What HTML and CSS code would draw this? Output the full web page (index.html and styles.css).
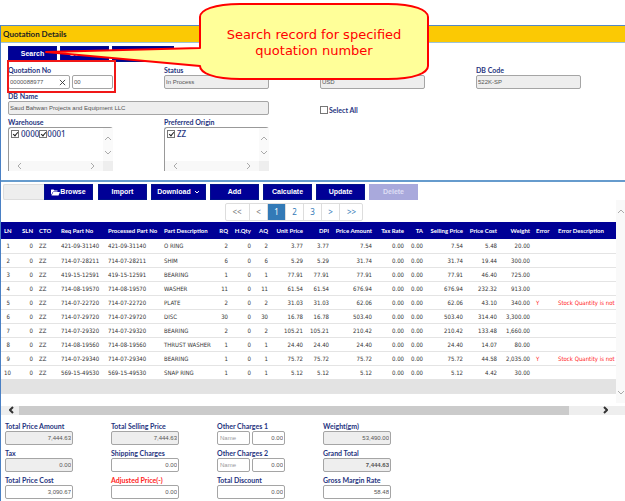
FILE: index.html
```html
<!DOCTYPE html>
<html lang="en">
<head>
<meta charset="utf-8">
<title>Quotation Details</title>
<link rel="stylesheet" href="styles.css">
</head>
<body>
<main class="page">
  <h1 class="title">Quotation Details</h1>
  <section class="details">
    <div class="actions">
      <button class="btn w-s">Search</button>
      <button class="btn w-s">Generate</button>
      <button class="btn w-l" aria-label="Reset"></button>
    </div>
    <div class="fields">
      <div class="field">
        <label for="qno">Quotation No</label>
        <div class="pair">
          <div class="clearable"><input id="qno" value="0000088977"><button class="clear" aria-label="Clear"><svg viewBox="0 0 8 8"><path d="M1 1L7 7M7 1L1 7"/></svg></button></div>
          <input class="rev" aria-label="Revision" value="00">
        </div>
      </div>
      <div class="field"><label for="status">Status</label><input id="status" readonly value="In Process"></div>
      <div class="field"><label for="cur">Currency</label><input id="cur" readonly value="USD"></div>
      <div class="field"><label for="code">DB Code</label><input id="code" readonly value="522K-SP"></div>
      <div class="field wide"><label for="dbname">DB Name</label><input id="dbname" readonly value="Saud Bahwan Projects and Equipment LLC"></div>
      <div class="field select-all"><label><input type="checkbox">Select All</label></div>
      <div class="field start">
        <span class="caption">Warehouse</span>
        <div class="list">
          <div class="options"><label><input type="checkbox" checked><span>0000</span></label><label class="next"><input type="checkbox" checked>0001</label></div>
          <div class="vbar"><svg viewBox="0 0 8 5"><path d="M1 4L4 1L7 4"/></svg><svg viewBox="0 0 8 5"><path d="M1 1L4 4L7 1"/></svg></div>
          <div class="hbar"><svg viewBox="0 0 5 8"><path d="M4 1L1 4L4 7"/></svg><svg viewBox="0 0 5 8"><path d="M1 1L4 4L1 7"/></svg></div>
          <div class="corner"></div>
        </div>
      </div>
      <div class="field">
        <span class="caption">Preferred Origin</span>
        <div class="list">
          <div class="options"><label><input type="checkbox" checked><span>ZZ</span></label></div>
          <div class="vbar"><svg viewBox="0 0 8 5"><path d="M1 4L4 1L7 4"/></svg><svg viewBox="0 0 8 5"><path d="M1 1L4 4L7 1"/></svg></div>
          <div class="hbar"><svg viewBox="0 0 5 8"><path d="M4 1L1 4L4 7"/></svg><svg viewBox="0 0 5 8"><path d="M1 1L4 4L1 7"/></svg></div>
          <div class="corner"></div>
        </div>
      </div>
    </div>
  </section>

  <section class="items">
    <div class="toolbar">
      <div class="upload"><input readonly aria-label="File"><button class="btn w-s"><svg class="folder" viewBox="0 0 18 14"><path d="M0 12V2Q0 1 1 1H5L7 3H13V5H5Q4 5 3.500 6Z"/><path d="M4.500 6H18L15 13H1Z"/></svg>Browse</button></div>
      <button class="btn w-s">Import</button>
      <button class="btn w-m">Download <svg class="caret" viewBox="0 0 6 4"><path d="M1 1L3 3L5 1"/></svg></button>
      <button class="btn w-s">Add</button>
      <button class="btn w-s">Calculate</button>
      <button class="btn w-s">Update</button>
      <button class="btn w-s" disabled>Delete</button>
    </div>
    <div class="viewport">
      <div class="content">
        <nav class="pager" aria-label="Pages">
          <a class="off wide-page" href="#">&lt;&lt;</a><a class="off" href="#">&lt;</a><a class="current" href="#">1</a><a href="#">2</a><a href="#">3</a><a href="#">&gt;</a><a class="wide-page" href="#">&gt;&gt;</a>
        </nav>
        <table>
          <colgroup><col class="c12"><col class="c23"><col class="c22"><col class="c47"><col class="c56"><col class="c54"><col class="c16"><col class="c23"><col class="c17"><col class="c35"><col class="c26"><col class="c43"><col class="c32"><col class="c19"><col class="c40"><col class="c34"><col class="c33"><col class="c22"><col></colgroup>
          <thead><tr><th class="n">LN</th><th class="n">SLN</th><th>CTO</th><th>Req Part No</th><th>Processed Part No</th><th>Part Description</th><th class="n">RQ</th><th class="n">H.Qty</th><th class="n">AQ</th><th class="n">Unit Price</th><th class="n">DPI</th><th class="n">Price Amount</th><th class="n">Tax Rate</th><th class="n">TA</th><th class="n">Selling Price</th><th class="n">Price Cost</th><th class="n">Weight</th><th>Error</th><th>Error Description</th></tr></thead>
          <tbody>
            <tr><td class="n">1</td><td class="n">0</td><td>ZZ</td><td>421-09-31140</td><td>421-09-31140</td><td>O RING</td><td class="n">2</td><td class="n">0</td><td class="n">2</td><td class="n">3.77</td><td class="n">3.77</td><td class="n">7.54</td><td class="n">0.00</td><td class="n">0.00</td><td class="n">7.54</td><td class="n">5.48</td><td class="n">20.00</td><td></td><td></td></tr>
            <tr><td class="n">2</td><td class="n">0</td><td>ZZ</td><td>714-07-28211</td><td>714-07-28211</td><td>SHIM</td><td class="n">6</td><td class="n">0</td><td class="n">6</td><td class="n">5.29</td><td class="n">5.29</td><td class="n">31.74</td><td class="n">0.00</td><td class="n">0.00</td><td class="n">31.74</td><td class="n">19.44</td><td class="n">300.00</td><td></td><td></td></tr>
            <tr><td class="n">3</td><td class="n">0</td><td>ZZ</td><td>419-15-12591</td><td>419-15-12591</td><td>BEARING</td><td class="n">1</td><td class="n">0</td><td class="n">1</td><td class="n">77.91</td><td class="n">77.91</td><td class="n">77.91</td><td class="n">0.00</td><td class="n">0.00</td><td class="n">77.91</td><td class="n">46.40</td><td class="n">725.00</td><td></td><td></td></tr>
            <tr><td class="n">4</td><td class="n">0</td><td>ZZ</td><td>714-08-19570</td><td>714-08-19570</td><td>WASHER</td><td class="n">11</td><td class="n">0</td><td class="n">11</td><td class="n">61.54</td><td class="n">61.54</td><td class="n">676.94</td><td class="n">0.00</td><td class="n">0.00</td><td class="n">676.94</td><td class="n">232.32</td><td class="n">913.00</td><td></td><td></td></tr>
            <tr><td class="n">5</td><td class="n">0</td><td>ZZ</td><td>714-07-22720</td><td>714-07-22720</td><td>PLATE</td><td class="n">2</td><td class="n">0</td><td class="n">2</td><td class="n">31.03</td><td class="n">31.03</td><td class="n">62.06</td><td class="n">0.00</td><td class="n">0.00</td><td class="n">62.06</td><td class="n">43.10</td><td class="n">340.00</td><td class="err">Y</td><td class="err">Stock Quantity is not</td></tr>
            <tr><td class="n">6</td><td class="n">0</td><td>ZZ</td><td>714-07-29720</td><td>714-07-29720</td><td>DISC</td><td class="n">30</td><td class="n">0</td><td class="n">30</td><td class="n">16.78</td><td class="n">16.78</td><td class="n">503.40</td><td class="n">0.00</td><td class="n">0.00</td><td class="n">503.40</td><td class="n">314.40</td><td class="n">3,300.00</td><td></td><td></td></tr>
            <tr><td class="n">7</td><td class="n">0</td><td>ZZ</td><td>714-07-29320</td><td>714-07-29320</td><td>BEARING</td><td class="n">2</td><td class="n">0</td><td class="n">2</td><td class="n">105.21</td><td class="n">105.21</td><td class="n">210.42</td><td class="n">0.00</td><td class="n">0.00</td><td class="n">210.42</td><td class="n">133.48</td><td class="n">1,660.00</td><td></td><td></td></tr>
            <tr><td class="n">8</td><td class="n">0</td><td>ZZ</td><td>714-08-19560</td><td>714-08-19560</td><td>THRUST WASHER</td><td class="n">1</td><td class="n">0</td><td class="n">1</td><td class="n">24.40</td><td class="n">24.40</td><td class="n">24.40</td><td class="n">0.00</td><td class="n">0.00</td><td class="n">24.40</td><td class="n">14.07</td><td class="n">80.00</td><td></td><td></td></tr>
            <tr><td class="n">9</td><td class="n">0</td><td>ZZ</td><td>714-07-29340</td><td>714-07-29340</td><td>BEARING</td><td class="n">1</td><td class="n">0</td><td class="n">1</td><td class="n">75.72</td><td class="n">75.72</td><td class="n">75.72</td><td class="n">0.00</td><td class="n">0.00</td><td class="n">75.72</td><td class="n">44.58</td><td class="n">2,035.00</td><td class="err">Y</td><td class="err">Stock Quantity is not</td></tr>
            <tr><td class="n">10</td><td class="n">0</td><td>ZZ</td><td>569-15-49530</td><td>569-15-49530</td><td>SNAP RING</td><td class="n">1</td><td class="n">0</td><td class="n">1</td><td class="n">5.12</td><td class="n">5.12</td><td class="n">5.12</td><td class="n">0.00</td><td class="n">0.00</td><td class="n">5.12</td><td class="n">4.42</td><td class="n">30.00</td><td></td><td></td></tr>
          </tbody>
          <tfoot><tr><td colspan="19"></td></tr></tfoot>
        </table>
      </div>
      <div class="rail"><svg viewBox="0 0 8 5"><path d="M1 4L4 1L7 4"/></svg><svg viewBox="0 0 8 5"><path d="M1 1L4 4L7 1"/></svg></div>
    </div>
    <div class="scroll"><svg viewBox="0 0 5 8"><path d="M4 1L1 4L4 7"/></svg><div class="track"><div class="thumb"></div></div><svg viewBox="0 0 5 8"><path d="M1 1L4 4L1 7"/></svg></div>
  </section>

  <section class="totals">
    <div class="field"><label for="t1">Total Price Amount</label><input id="t1" readonly value="7,444.63"></div>
    <div class="field"><label for="t2">Total Selling Price</label><input id="t2" readonly value="7,444.63"></div>
    <div class="field"><label for="t3">Other Charges 1</label><div class="pair"><input class="name" placeholder="Name" aria-label="Charge 1 name"><input id="t3" value="0.00"></div></div>
    <div class="field"><label for="t4">Weight(gm)</label><input id="t4" readonly value="53,490.00"></div>
    <div class="field"><label for="t5">Tax</label><input id="t5" readonly value="0.00"></div>
    <div class="field"><label for="t6">Shipping Charges</label><input id="t6" value="0.00"></div>
    <div class="field"><label for="t7">Other Charges 2</label><div class="pair"><input class="name" placeholder="Name" aria-label="Charge 2 name"><input id="t7" value="0.00"></div></div>
    <div class="field"><label for="t8">Grand Total</label><input id="t8" class="grand" readonly value="7,444.63"></div>
    <div class="field"><label for="t9">Total Price Cost</label><input id="t9" value="3,090.67"></div>
    <div class="field"><label class="err" for="t10">Adjusted Price(-)</label><input id="t10" value="0.00"></div>
    <div class="field"><label for="t11">Total Discount</label><input id="t11" value="0.00"></div>
    <div class="field"><label for="t12">Gross Margin Rate</label><input id="t12" value="58.48"></div>
  </section>
</main>

<div class="highlight"></div>
<div class="callout">
  <svg viewBox="0 0 392 80"><path d="M194 17C194 10 208 4 234 4H382C408 4 422 10 422 17V66C422 73 408 79 382 79H234C208 79 194 73 194 66L40 52L194 48Z" transform="translate(-34 0)"/></svg>
  <p>Search record for specified<br>quotation number</p>
</div>
</body>
</html>
```
FILE: styles.css
```css
* { box-sizing: border-box; }
body { margin: 0; padding-top: 25px; position: relative; background: #fff; color: #333; font: 7px/10px "Liberation Sans", sans-serif; overflow-x: hidden; }
input, button { font: inherit; margin: 0; }
svg { display: block; fill: none; stroke: #aaa; }
a { text-decoration: none; }
.page { border-left: 1px solid #4a80c4; }
.title { margin: 0; height: 18px; padding-left: 2px; border-top: 1px solid #5588c4; border-bottom: 1px solid #9dc3d8; background: #fbc904; color: #222; font: 700 8px/16px Lato, sans-serif; }

.btn { height: 16px; padding: 0; border: 1px solid #00128c; background: #000096; color: #fff; font-weight: 700; display: flex; align-items: center; justify-content: center; }
.btn:disabled { background: #a9a9dc; border-color: #a9a9dc; color: #dedef4; }
.w-s { width: 49px; }
.w-m { width: 55px; }
.w-l { width: 62px; }

.details { padding: 3px 0 9px 7px; }
.actions { display: flex; gap: 3px; }
.fields { display: grid; grid-template-columns: repeat(4, 105px); column-gap: 51px; row-gap: 2px; padding-top: 3px; }
.field { display: flex; flex-direction: column; }
.field > label, .caption, .select-all label { height: 10px; color: #1f3480; font: 700 7px/10px Lato, sans-serif; white-space: nowrap; }
.field input:not([type=checkbox]) { width: 100%; min-width: 0; height: 14px; padding: 0 1px; border: 1px solid #a5a5a5; border-radius: 2px; background: #fff; color: #555; font-size: 6px; outline: 0; }
.field input[readonly]:not([type=checkbox]) { background: #eee; }
.pair { display: flex; gap: 2px; }
.clearable { position: relative; flex: 0 0 62px; }
.clear { position: absolute; right: 4px; top: 4px; width: 7px; height: 7px; padding: 0; border: 0; background: none; }
.clear svg { width: 7px; height: 7px; stroke: #333; }
.wide { grid-column: span 2; }
.start { grid-column: 1; }
input[type=checkbox] { appearance: none; flex: none; width: 8px; height: 8px; border: 1px solid #777; background: #fff; position: relative; }
input[type=checkbox]:checked::after { content: ""; position: absolute; left: 2px; top: 0; width: 2px; height: 4px; border: solid #222; border-width: 0 1px 1px 0; transform: rotate(40deg); }
.field.select-all { justify-content: flex-end; }
.select-all label { display: flex; align-items: center; gap: 1px; }
.list { display: grid; grid-template-columns: 1fr 10px; grid-template-rows: 33px 10px; border: solid #999; border-width: 1px 0 0 1px; border-radius: 3px 3px 0 0; }
.options { display: flex; padding: 2px; color: #1f3480; font: 500 8px/8px "Noto Sans", sans-serif; }
.options label { display: flex; height: 8px; gap: 2px; }
.options .next { gap: 0; }
.vbar { display: flex; flex-direction: column; justify-content: flex-end; gap: 9px; align-items: center; padding-bottom: 6px; background: #fafafa; }
.vbar svg { width: 8px; height: 5px; }
.hbar { display: flex; justify-content: space-between; align-items: center; padding: 0 8px; background: #f8f8f8; }
.hbar svg { width: 5px; height: 8px; }
.corner { background: #eee; }

.items { border-top: 2px solid #669bcd; padding-top: 2px; }
.toolbar { display: flex; gap: 4px; padding-left: 2px; }
.upload { display: flex; margin-right: 1px; }
.upload input { width: 41px; height: 16px; padding: 0; border: 1px solid #ddd; border-right: 0; border-radius: 2px 0 0 2px; background: #eee; }
.folder { width: 9px; height: 7px; fill: #fff; stroke: none; }
.caret { width: 6px; height: 4px; margin-left: 3px; stroke: #fff; }
.viewport { display: flex; }
.content { flex: 1; min-width: 0; padding-top: 3px; }
.pager { display: flex; justify-content: center; width: 138px; margin: 0 auto 1px 224px; border: 1px solid #ddd; border-radius: 2px; }
.pager a { flex: 1 0 18px; height: 16px; border-left: 1px solid #ddd; color: #337ab7; font: 8px/16px "Noto Sans", sans-serif; text-align: center; }
.pager a:first-child { border-left: 0; }
.pager .wide-page { flex-basis: 24px; }
.pager .off { color: #777; }
.pager .current { background: #337ab7; color: #fff; }
table { width: 100%; table-layout: fixed; border-collapse: collapse; }
th, td { padding: 0 3px; text-align: left; white-space: nowrap; }
th { height: 17px; background: #000096; color: #fff; font: 700 6px/16px Lato, sans-serif; }
td { height: 14px; border-bottom: 1px solid #e4e4e4; color: #333; font: 6px/13px "DejaVu Sans Condensed", "DejaVu Sans", sans-serif; }
td:last-child { overflow: hidden; }
.n { text-align: right; }
td.err, .field > label.err { color: #f22; }
tfoot td { background: #e3e3e3; }
.rail { width: 9px; margin-bottom: -9px; padding: 9px 0 8px; display: flex; flex-direction: column; justify-content: space-between; align-items: center; background: #f9f9f9; }
.rail svg { width: 8px; height: 5px; }
.scroll { display: flex; align-items: center; height: 9px; margin-top: 12px; padding: 0 17px 0 8px; background: #eee; }
.scroll svg { width: 5px; height: 8px; stroke: #333; stroke-width: 2; }
.track { flex: 1; padding: 0 34px 0 5px; }
.thumb { height: 9px; background: #cbcbcb; }
.c12 { width: 12px; } .c16 { width: 16px; } .c17 { width: 17px; } .c19 { width: 19px; }
.c22 { width: 22px; } .c23 { width: 23px; } .c26 { width: 26px; } .c32 { width: 32px; }
.c33 { width: 33px; } .c34 { width: 34px; } .c35 { width: 35px; } .c40 { width: 40px; }
.c43 { width: 43px; } .c47 { width: 47px; } .c54 { width: 54px; } .c56 { width: 56px; }

.totals { display: grid; grid-template-columns: repeat(4, 68px); column-gap: 38px; row-gap: 3px; padding: 6px 0 2px 4px; }
.totals .field input { text-align: right; }
.totals .field .name { text-align: left; padding-left: 2px; }
.name::placeholder { color: #999; }
.totals .field .grand { font-weight: 700; }

.highlight { position: absolute; left: 7px; top: 60px; width: 109px; height: 33px; border: 2px solid #f01818; }
.callout { position: absolute; left: 40px; top: 0; width: 392px; height: 80px; }
.callout svg { position: absolute; width: 392px; height: 80px; overflow: visible; }
.callout path { fill: #ffff99; stroke: #f00; stroke-width: 2; stroke-linejoin: round; }
.callout p { position: relative; width: 228px; margin: 0 0 0 160px; padding-top: 27px; color: #f00; font: 13px/16px "DejaVu Sans", sans-serif; text-align: center; }
```
